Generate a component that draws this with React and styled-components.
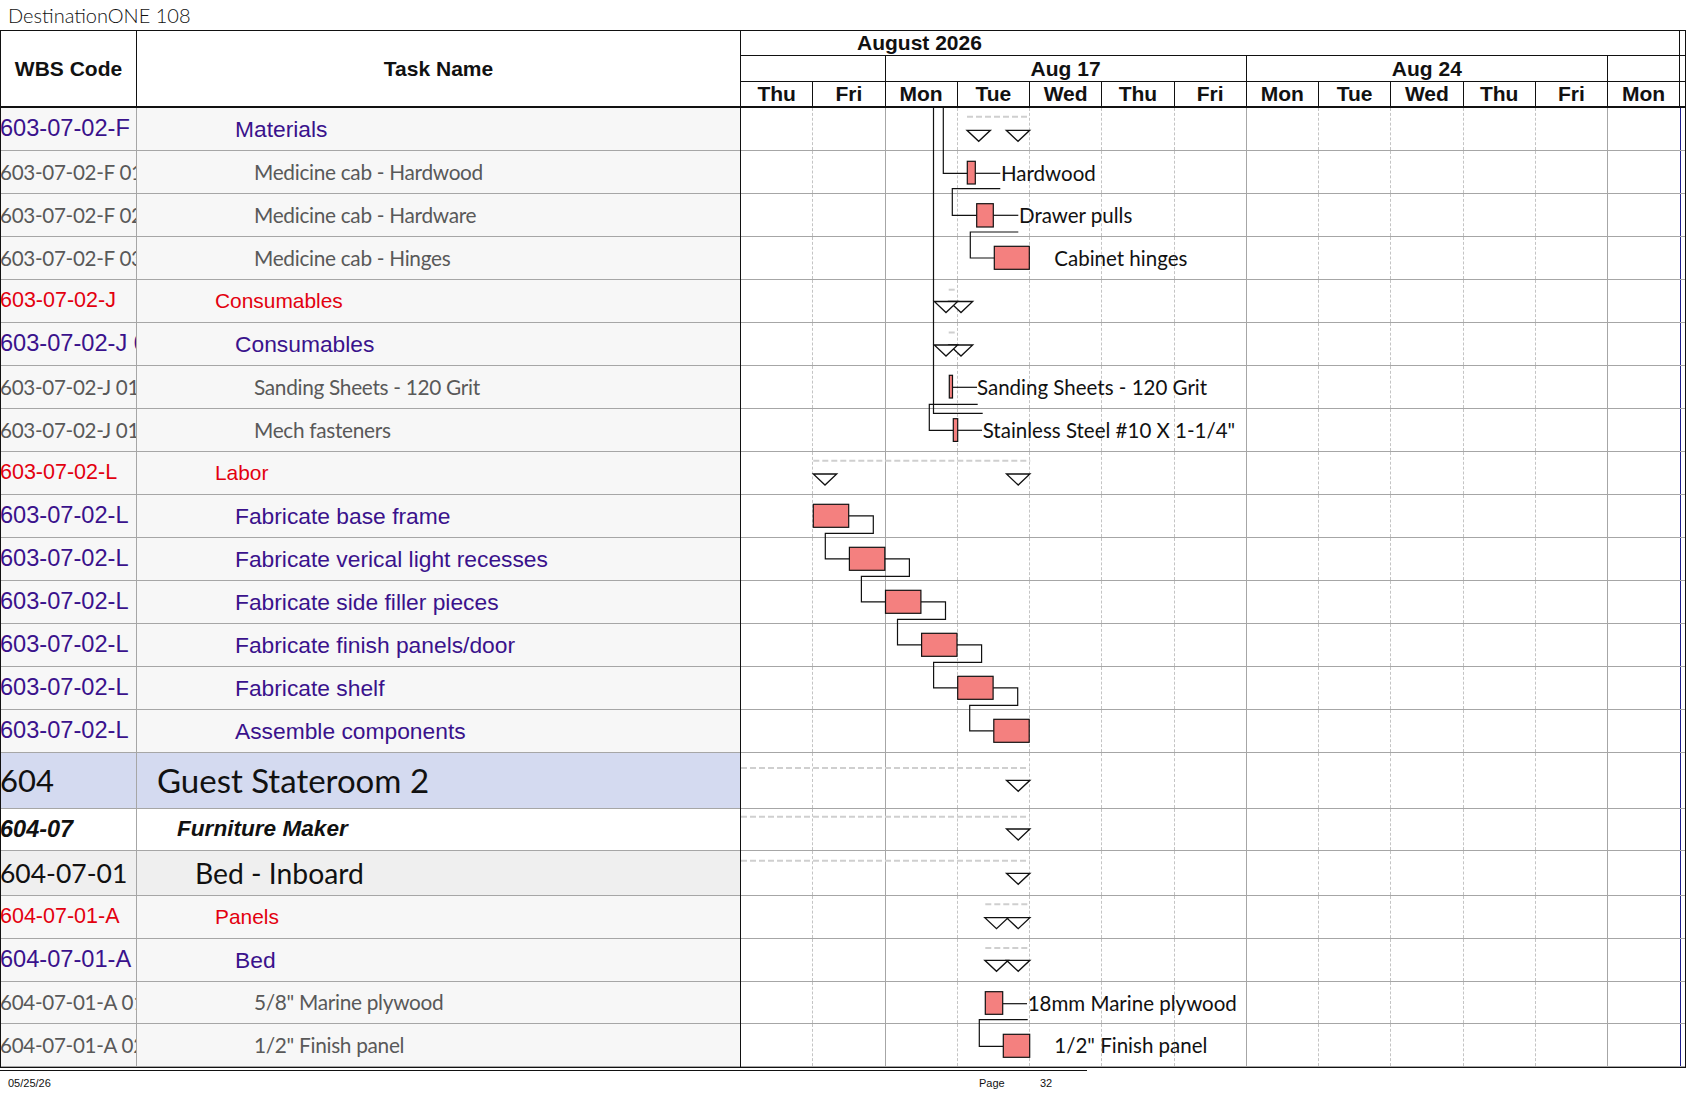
import styled, { createGlobalStyle } from "styled-components";

const GlobalStyle = createGlobalStyle`
    html, body {
        margin: 0;
        padding: 0;
        background: #ffffff;
    }
    body {
        font-family: "Liberation Sans", Arial, sans-serif;
        color: #111111;
    }
`

const DAY = 72.25;
const dayNames = ["Thu", "Fri", "Mon", "Tue", "Wed", "Thu", "Fri", "Mon", "Tue", "Wed", "Thu", "Fri", "Mon"];
const weekEnds = [1, 6, 11];

const rows = [
    { code: "603-07-02-F", name: "Materials", kind: "purple" },
    { code: "603-07-02-F 01", name: "Medicine cab - Hardwood", kind: "item" },
    { code: "603-07-02-F 02", name: "Medicine cab - Hardware", kind: "item" },
    { code: "603-07-02-F 03", name: "Medicine cab - Hinges", kind: "item" },
    { code: "603-07-02-J", name: "Consumables", kind: "red" },
    { code: "603-07-02-J 01", name: "Consumables", kind: "purple" },
    { code: "603-07-02-J 01-01", name: "Sanding Sheets - 120 Grit", kind: "item" },
    { code: "603-07-02-J 01-02", name: "Mech fasteners", kind: "item" },
    { code: "603-07-02-L", name: "Labor", kind: "red" },
    { code: "603-07-02-L", name: "Fabricate base frame", kind: "purple" },
    { code: "603-07-02-L", name: "Fabricate verical light recesses", kind: "purple" },
    { code: "603-07-02-L", name: "Fabricate side filler pieces", kind: "purple" },
    { code: "603-07-02-L", name: "Fabricate finish panels/door", kind: "purple" },
    { code: "603-07-02-L", name: "Fabricate shelf", kind: "purple" },
    { code: "603-07-02-L", name: "Assemble components", kind: "purple" },
    { code: "604", name: "Guest Stateroom 2", kind: "room", height: 56, bg: "#d4daf0" },
    { code: "604-07", name: "Furniture Maker", kind: "trade", height: 42, bg: "#ffffff" },
    { code: "604-07-01", name: "Bed - Inboard", kind: "unit", height: 45, bg: "#efefef" },
    { code: "604-07-01-A", name: "Panels", kind: "red" },
    { code: "604-07-01-A", name: "Bed", kind: "purple" },
    { code: "604-07-01-A 01", name: "5/8\" Marine plywood", kind: "item", height: 42 },
    { code: "604-07-01-A 02", name: "1/2\" Finish panel", kind: "item" },
];

const ARIAL = `"Liberation Sans", Arial, sans-serif`;
const HUMANIST = `Lato, "Open Sans", sans-serif`;

const kinds = {
    purple: { font: ARIAL, size: 22.8, codeSize: 23.6, color: "#3a128c", indent: 98 },
    red: { font: ARIAL, size: 20.9, codeSize: 21.5, color: "#e3000f", indent: 78 },
    item: { font: HUMANIST, size: 20.8, codeSize: 20.6, color: "#595959", indent: 117, track: -0.3 },
    room: { font: HUMANIST, size: 33, codeSize: 31, color: "#111111", indent: 20 },
    trade: { font: ARIAL, size: 22.6, codeSize: 23.5, color: "#111111", indent: 40, bold: true, italic: true },
    unit: { font: HUMANIST, size: 28.3, codeSize: 26.5, color: "#111111", indent: 58 },
};

// chart data, coordinates relative to the top-left of the gantt body
const BAR_FILL = "#f4807f";

const fabBars = [0, 1, 2, 3, 4, 5].map(i => ({
    x: 72.3 + 36.1 * i,
    y: 387 + i * 43 + 9.3,
    w: 35.4,
    h: 23,
}));

const bars = [
    { x: 226.3, y: 53.3, w: 8, h: 22.7 },
    { x: 235.7, y: 95.7, w: 16.6, h: 23.3 },
    { x: 253.3, y: 138.3, w: 35, h: 23 },
    { x: 208.3, y: 267.3, w: 3.2, h: 22.7 },
    { x: 212.3, y: 310.7, w: 4.4, h: 22.7 },
    ...fabBars,
    { x: 244.3, y: 883.7, w: 17.4, h: 22.6 },
    { x: 262.3, y: 926.3, w: 26.4, h: 23 },
];

const fabLinks = fabBars.slice(0, 5).map((b, i) => {
    const next = fabBars[i + 1];
    const right = b.x + b.w;
    const cy = b.y + b.h / 2;
    const ny = next.y + next.h / 2;
    const low = b.y + b.h + 6;
    return `${right},${cy} ${right + 24.6},${cy} ${right + 24.6},${low} ${b.x + 12},${low} ${b.x + 12},${ny} ${next.x},${ny}`;
});

const links = [
    "192.5,0 192.5,305.3 241.7,305.3",
    "202.3,0 202.3,65.3 226.3,65.3",
    "234.3,65.3 259.3,65.3",
    "259.3,80.7 211.3,80.7 211.3,107.3 235.7,107.3",
    "252.3,107.3 277.3,107.3",
    "277.3,124 229.3,124 229.3,150 253.3,150",
    "211.5,279.3 236,279.3",
    "236.7,296.3 188.3,296.3 188.3,322.3 212.3,322.3",
    "216.7,322.3 241,322.3",
    ...fabLinks,
    "261.7,895.7 286,895.7",
    "286.7,911.7 238.3,911.7 238.3,938.3 262.3,938.3",
];

const summaries = [
    { dash: [226, 288.3], dashY: 8.7, triY: 22.3, tris: [277, 237.7] },
    { dash: [207.7, 216.7], dashY: 181.7, triY: 193.5, tris: [220, 205] },
    { dash: [207.7, 216.7], dashY: 224.5, triY: 237, tris: [220, 205] },
    { dash: [72.3, 289.3], dashY: 352.7, triY: 366, tris: [84, 277.2] },
    { dash: [0, 288.7], dashY: 660, triY: 672.3, tris: [277.2] },
    { dash: [0, 288.7], dashY: 708.7, triY: 721, tris: [277.2] },
    { dash: [0, 288.7], dashY: 752.7, triY: 765.3, tris: [277.2] },
    { dash: [244.3, 288.7], dashY: 796.3, triY: 809.7, tris: [277.2, 255.5] },
    { dash: [244.3, 288.7], dashY: 840, triY: 852.3, tris: [277.2, 255.5] },
];

const labels = [
    { x: 260, y: 72.5, text: "Hardwood" },
    { x: 278, y: 114.5, text: "Drawer pulls" },
    { x: 313.3, y: 157.5, text: "Cabinet hinges" },
    { x: 236, y: 286.5, text: "Sanding Sheets - 120 Grit" },
    { x: 241.7, y: 329.5, text: "Stainless Steel #10 X 1-1/4\"" },
    { x: 286.7, y: 903, text: "18mm Marine plywood" },
    { x: 313.3, y: 945, text: "1/2\" Finish panel" },
];

function GanttDrawing () {
    return (
        <Chart width="946" height="960" viewBox="0 0 946 960">
            {summaries.map((s, i) => (
                <g key={i}>
                    <line x1={s.dash[0]} y1={s.dashY} x2={s.dash[1]} y2={s.dashY} stroke="#cfcfcf" strokeWidth="2" strokeDasharray="6 3" />
                    {s.tris.map((cx, j) => (
                        <polygon key={j} points={`${cx - 11.7},${s.triY} ${cx + 11.7},${s.triY} ${cx},${s.triY + 11}`} fill="#ffffff" stroke="#111111" strokeWidth="1.3" />
                    ))}
                </g>
            ))}
            {links.map((p, i) => (
                <polyline key={i} points={p} fill="none" stroke="#111111" strokeWidth="1.2" />
            ))}
            {bars.map((b, i) => (
                <rect key={i} x={b.x} y={b.y} width={b.w} height={b.h} fill={BAR_FILL} stroke="#111111" strokeWidth="1.2" />
            ))}
            {labels.map((l, i) => (
                <ChartLabel key={i} x={l.x} y={l.y}>{l.text}</ChartLabel>
            ))}
        </Chart>
    )
}

export default function App () {
    return (
        <>
            <GlobalStyle />
            <Page>
                <Title>DestinationONE 108</Title>
                <Frame>
                    <LeftTable>
                        <HeadRow>
                            <HeadCell $code>WBS Code</HeadCell>
                            <HeadCell>Task Name</HeadCell>
                        </HeadRow>
                        {rows.map((row, i) => {
                            const k = kinds[row.kind];
                            return (
                                <Row key={i} $height={row.height || 43} $bg={row.bg || "#f7f7f7"}>
                                    <CodeCell>
                                        <CellText $k={k} $size={k.codeSize}>{row.code}</CellText>
                                    </CodeCell>
                                    <NameCell $indent={k.indent}>
                                        <CellText $k={k} $size={k.size}>{row.name}</CellText>
                                    </NameCell>
                                </Row>
                            )
                        })}
                    </LeftTable>

                    <Gantt>
                        <GanttHead>
                            <HeadLine $height={25}>
                                <MonthCell>August 2026</MonthCell>
                                <EdgeGap />
                            </HeadLine>
                            <HeadLine $height={26}>
                                <WeekCell $days={2} />
                                <WeekCell $days={5}>Aug 17</WeekCell>
                                <WeekCell $days={5}>Aug 24</WeekCell>
                                <WeekCell $days={1} />
                                <EdgeGap />
                            </HeadLine>
                            <HeadLine $height={26} $thick>
                                {dayNames.map((d, i) => <DayName key={i}>{d}</DayName>)}
                                <EdgeGap />
                            </HeadLine>
                        </GanttHead>

                        <GanttBody>
                            {rows.map((row, i) => (
                                <GanttRow key={i} $height={row.height || 43}>
                                    {dayNames.map((d, j) => (
                                        <DaySlot key={j} $week={weekEnds.includes(j)} $last={j === dayNames.length - 1} />
                                    ))}
                                    <StatusGap />
                                </GanttRow>
                            ))}
                            <GanttDrawing />
                        </GanttBody>
                    </Gantt>
                </Frame>

                <Footer>
                    <FootText $width={971}>05/25/26</FootText>
                    <FootText $width={61}>Page</FootText>
                    <FootText>32</FootText>
                </Footer>
            </Page>
        </>
    )
}

const Page = styled.div`
    width: 1687px;
    display: flex;
    flex-direction: column;
`
const Title = styled.div`
    height: 30px;
    line-height: 30px;
    padding-left: 8px;
    font-family: Lato, "Open Sans", sans-serif;
    font-weight: 300;
    font-size: 20px;
    color: #111111;
`
const Frame = styled.div`
    display: flex;
    width: 1686px;
    box-sizing: border-box;
    border: 1px solid #111111;
`
const LeftTable = styled.div`
    width: 739px;
    display: flex;
    flex-direction: column;
    flex-shrink: 0;
`
const HeadRow = styled.div`
    height: 77px;
    box-sizing: border-box;
    display: grid;
    grid-template-columns: 136px 1fr;
    border-bottom: 2px solid #111111;
`
const HeadCell = styled.div`
    display: flex;
    align-items: center;
    justify-content: center;
    font-family: "Liberation Sans", Arial, sans-serif;
    font-weight: bold;
    font-size: 21px;
    color: #111111;
    border-right: ${p => p.$code ? "1px solid #111111" : "none"};
`
const Row = styled.div`
    height: ${p => p.$height}px;
    box-sizing: border-box;
    display: grid;
    grid-template-columns: 136px 1fr;
    background: ${p => p.$bg};
    border-bottom: 1px solid #a6a6a6;
`
const CodeCell = styled.div`
    display: flex;
    align-items: center;
    overflow: hidden;
    white-space: nowrap;
    border-right: 1px solid #a6a6a6;
    margin-left: -1px;
`
const NameCell = styled.div`
    display: flex;
    align-items: center;
    overflow: hidden;
    white-space: nowrap;
    padding-left: ${p => p.$indent}px;
`
const CellText = styled.span`
    font-family: ${p => p.$k.font};
    font-size: ${p => p.$size}px;
    color: ${p => p.$k.color};
    font-weight: ${p => p.$k.bold ? "bold" : "normal"};
    font-style: ${p => p.$k.italic ? "italic" : "normal"};
    letter-spacing: ${p => p.$k.track || 0}px;
    line-height: 1;
`
const Gantt = styled.div`
    flex: 1;
    display: flex;
    flex-direction: column;
    border-left: 1px solid #111111;
`
const GanttHead = styled.div`
    height: 77px;
    display: flex;
    flex-direction: column;
`
const HeadLine = styled.div`
    height: ${p => p.$height}px;
    box-sizing: border-box;
    display: flex;
    border-bottom: ${p => p.$thick ? "2px" : "1px"} solid #111111;
`
const MonthCell = styled.div`
    width: ${DAY * 13}px;
    box-sizing: border-box;
    border-right: 1px solid #111111;
    padding-left: 116px;
    display: flex;
    align-items: center;
    font-weight: bold;
    font-size: 21px;
`
const WeekCell = styled.div`
    width: ${p => DAY * p.$days}px;
    box-sizing: border-box;
    border-right: 1px solid #111111;
    display: flex;
    align-items: center;
    justify-content: center;
    font-weight: bold;
    font-size: 21px;
`
const DayName = styled.div`
    width: ${DAY}px;
    box-sizing: border-box;
    border-right: 1px solid #111111;
    display: flex;
    align-items: center;
    justify-content: center;
    font-weight: bold;
    font-size: 21px;
`
const EdgeGap = styled.div`
    flex: 1;
`
const GanttBody = styled.div`
    position: relative;
    display: flex;
    flex-direction: column;
`
const GanttRow = styled.div`
    height: ${p => p.$height}px;
    box-sizing: border-box;
    display: flex;
    border-bottom: 1px solid #a6a6a6;
`
const DaySlot = styled.div`
    width: ${DAY}px;
    flex-shrink: 0;
    box-sizing: border-box;
    border-right: ${p => p.$last ? "none" : p.$week ? "1px solid #a6a6a6" : "1px dashed #c4c4c4"};
`
const StatusGap = styled.div`
    flex: 1;
    border-left: 1px solid #1c1c8a;
`
const Chart = styled.svg`
    position: absolute;
    top: 0;
    left: 0;
    pointer-events: none;
    overflow: visible;
`
const ChartLabel = styled.text`
    font-family: Lato, "Open Sans", sans-serif;
    font-size: 20.5px;
    fill: #111111;
`
const Footer = styled.div`
    margin-top: 2px;
    width: 1087px;
    border-top: 1px solid #111111;
    display: flex;
    align-items: center;
    height: 24px;
    padding-left: 8px;
    box-sizing: border-box;
`
const FootText = styled.div`
    width: ${p => p.$width ? `${p.$width}px` : "auto"};
    flex-shrink: 0;
    font-family: "Liberation Sans", Arial, sans-serif;
    font-size: 11px;
    color: #111111;
`
